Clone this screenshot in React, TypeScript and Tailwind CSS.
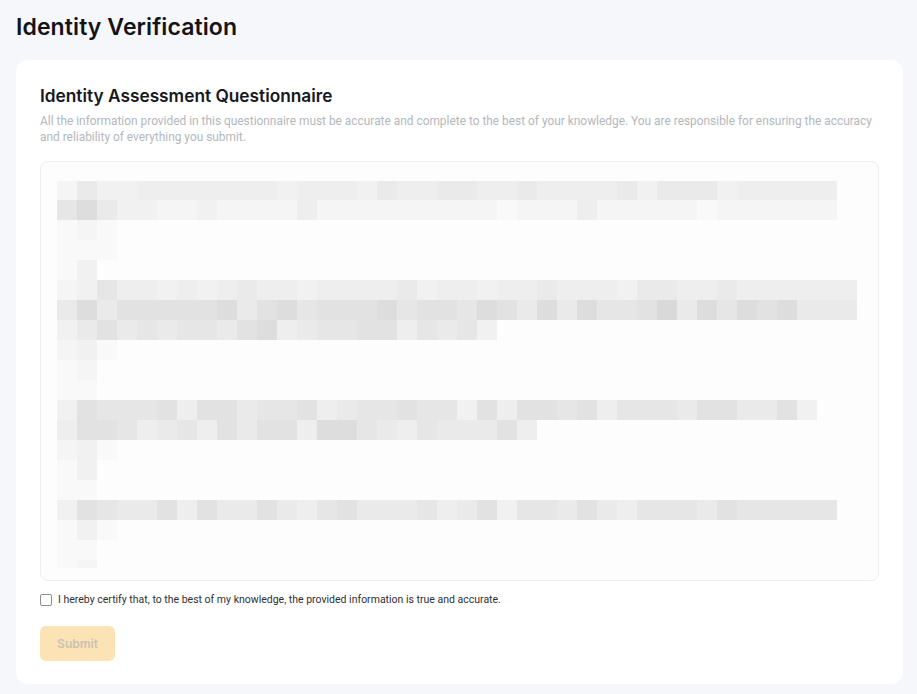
import React from "react";

// ─── Pixelated preview (40 cols × 20 rows, 20px blocks) ──────────────────────

const SHADE: Record<string, string> = {
  ".": "",
  a: "bg-[#f9f9f9]",
  "1": "bg-[#f5f5f5]",
  "2": "bg-[#f1f1f1]",
  "3": "bg-[#eeeeee]",
  "4": "bg-[#eaeaea]",
  "5": "bg-[#e6e6e6]",
  "6": "bg-[#e2e2e2]",
  "7": "bg-[#dddddd]",
  "8": "bg-[#d9d9d9]",
};

const pad = (s: string) => s + ".".repeat(40 - s.length);

const ROWS: string[] = [
  pad("142233333332333243344334333342444233333"),
  pad("5742211211113111111111a111311111a111111"),
  pad("a1a"),
  pad("aaa"),
  pad("a2"),
  "1253323234332333342332334333244334333333",
  "4746666674675666756657647475568475767444",
  pad("2464545546734556635452"),
  pad("12a"),
  pad("a1"),
  pad("aa"),
  pad("26555636645563455655263665635554664462"),
  pad("366534536466377543544463"),
  pad("12a"),
  pad("a2"),
  pad("aa"),
  pad("265446364464356444534625546435554655555"),
  pad("a2a"),
  pad("aa"),
  pad("a1"),
];

function rowHeight(i: number) {
  if (i === 0) return "h-[19px]";
  if (i === ROWS.length - 1) return "h-[8px]";
  return "h-5";
}

function Pixelated() {
  return (
    <div className="flex flex-col">
      {ROWS.map((row, i) => (
        <div key={i} className={`flex ${rowHeight(i)}`}>
          {row.split("").map((c, j) => (
            <div key={j} className={`w-5 h-full shrink-0 ${SHADE[c]}`} />
          ))}
        </div>
      ))}
    </div>
  );
}

// ─── Page ─────────────────────────────────────────────────────────────────────

export default function App() {
  return (
    <div
      className="min-h-[694px] w-[917px] bg-[#f6f7fb] pl-4 pr-[14px] pt-[13px] pb-[10px]"
      style={{ fontFamily: "Inter, 'Noto Sans', sans-serif" }}
    >
      <h1 className="text-[23px] leading-[28px] font-semibold text-[#131416] tracking-[0.1px]">
        Identity Verification
      </h1>

      <div className="mt-[19px] rounded-xl bg-white px-6 pt-6 pb-[23px]">
        <h2 className="text-[17.3px] leading-6 font-semibold text-[#16181b]">
          Identity Assessment Questionnaire
        </h2>
        <p
          className="mt-[5px] text-[11.9px] leading-4 text-[#b4b7bc]"
          style={{ fontFamily: "Roboto, 'Liberation Sans', sans-serif" }}
        >
          All the information provided in this questionnaire must be accurate and complete to the best of your
          knowledge. You are responsible for ensuring the accuracy and reliability of everything you submit.
        </p>

        {/* preview box */}
        <div className="mt-4 h-[420px] rounded-lg border border-[#eeeeee] bg-[#fdfdfd] pl-4 pt-[19px]">
          <Pixelated />
        </div>

        {/* certify */}
        <label className="mt-3 flex items-center gap-[6px] h-[14px]">
          <input
            type="checkbox"
            className="appearance-none w-3 h-3 rounded-[2px] border border-[#8e8e8e] bg-white shrink-0"
          />
          <span
            className="text-[10.5px] leading-[14px] text-[#2f3033]"
            style={{ fontFamily: "Roboto, 'Liberation Sans', sans-serif" }}
          >
            I hereby certify that, to the best of my knowledge, the provided information is true and accurate.
          </span>
        </label>

        <button className="mt-[19px] w-[75px] h-[35px] rounded-md bg-[#fbe3b5] text-[12px] font-semibold text-[#c9c2b2]">
          Submit
        </button>
      </div>
    </div>
  );
}
